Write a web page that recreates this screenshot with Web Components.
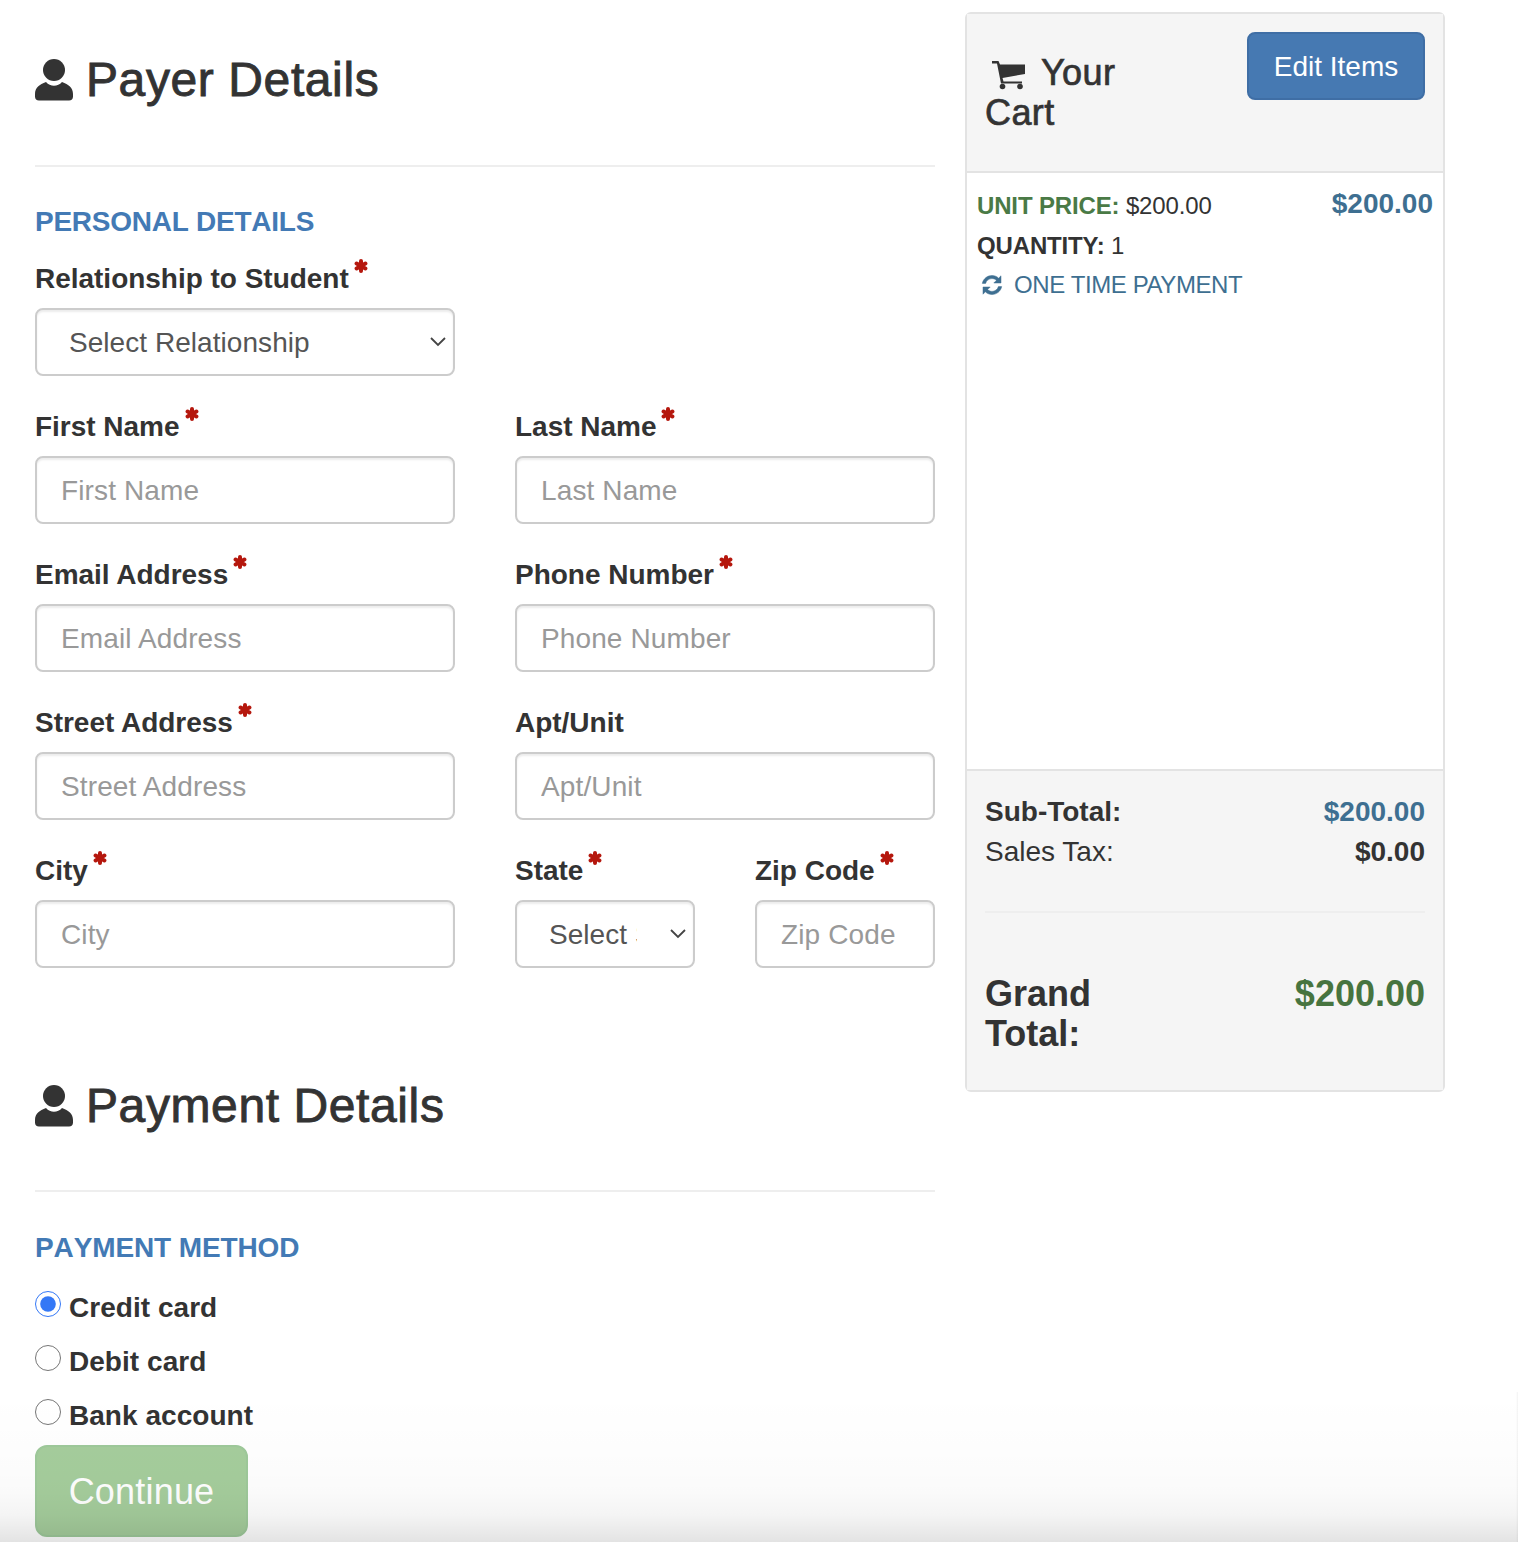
<!DOCTYPE html>
<html lang="en">
<head>
<meta charset="utf-8">
<title>Checkout</title>
<style>
  html, body { margin: 0; padding: 0; background: #fff; }
  body { height: 1542px; overflow: hidden; position: relative; font-family: "Liberation Sans", Arial, sans-serif; color: #333; }
</style>
</head>
<body>
<checkout-page>
  <div slot="form">
    <section-title>Payer Details</section-title>
    <sub-title>PERSONAL DETAILS</sub-title>
    <form-row>
      <form-field label="Relationship to Student" required>
        <drop-down text="Select Relationship"></drop-down>
      </form-field>
    </form-row>
    <form-row>
      <form-field label="First Name" required><text-box placeholder="First Name"></text-box></form-field>
      <form-field label="Last Name" required><text-box placeholder="Last Name"></text-box></form-field>
    </form-row>
    <form-row>
      <form-field label="Email Address" required><text-box placeholder="Email Address"></text-box></form-field>
      <form-field label="Phone Number" required><text-box placeholder="Phone Number"></text-box></form-field>
    </form-row>
    <form-row>
      <form-field label="Street Address" required><text-box placeholder="Street Address"></text-box></form-field>
      <form-field label="Apt/Unit"><text-box placeholder="Apt/Unit"></text-box></form-field>
    </form-row>
    <form-row>
      <form-field label="City" required><text-box placeholder="City"></text-box></form-field>
      <form-row nested>
        <form-field label="State" required><drop-down text="Select State"></drop-down></form-field>
        <form-field label="Zip Code" required><text-box placeholder="Zip Code"></text-box></form-field>
      </form-row>
    </form-row>
    <section-title second>Payment Details</section-title>
    <sub-title>PAYMENT METHOD</sub-title>
    <radio-option checked>Credit card</radio-option>
    <radio-option>Debit card</radio-option>
    <radio-option>Bank account</radio-option>
    <continue-button>Continue</continue-button>
  </div>
  <cart-panel slot="cart"></cart-panel>
</checkout-page>
<bottom-fade></bottom-fade>

<script>
(function() {

    // Shared helper: every element gets an open shadow root from a template string.
    function make(name, html, observed) {
        const template = document.createElement('template');
        template.innerHTML = html;
        class Element extends HTMLElement {
            constructor() {
                super();
                this.attachShadow({mode: 'open'});
                this.shadowRoot.appendChild(template.content.cloneNode(true));
            }
            connectedCallback() {
                if (observed) observed(this, this.shadowRoot);
            }
        }
        customElements.define(name, Element);
    }

    const USER_ICON = `<svg viewBox="0 0 38 42" width="38" height="42" fill="#333" aria-hidden="true">
        <circle cx="19" cy="11" r="11"/>
        <path d="M0 35C0 28.500 4.500 25.500 11 23c2.200 2.500 5 3.800 8 3.800s5.800-1.300 8-3.800c6.500 2.500 11 5.500 11 12v2.500c0 2.500-1.500 4-4 4H4c-2.500 0-4-1.500-4-4z"/>
    </svg>`;

    make('checkout-page', `
        <style>
          :host { display: flex; align-items: flex-start; gap: 30px; padding-left: 35px; }
          .form { width: 900px; flex: none; }
          .cart { width: 480px; flex: none; margin-top: 12px; }
        </style>
        <div class="form"><slot name="form"></slot></div>
        <div class="cart"><slot name="cart"></slot></div>`);

    make('section-title', `
        <style>
          :host { display: block; border-bottom: 2px solid #eee; height: 167px; box-sizing: border-box; }
          :host([second]) { height: 166px; margin-top: 43px; }
          h2 { margin: 0; padding-top: 54px; display: flex; align-items: center; gap: 13px; font-size: 48px; line-height: 52px; font-weight: 400; font-kerning: none; letter-spacing: .6px; -webkit-text-stroke: .9px #333; color: #333; }
          svg { flex: none; }
        </style>
        <h2>${USER_ICON}<slot></slot></h2>`);

    make('sub-title', `
        <style>
          :host { display: block; margin-top: 39px; font-size: 28px; line-height: 32px; font-weight: 700; font-kerning: none; color: #437ab5; letter-spacing: -.25px; }
          :host(:nth-of-type(2)) { margin-top: 40px; letter-spacing: -.12px; }
        </style>
        <slot></slot>`);

    make('form-row', `
        <style>
          :host { display: grid; grid-template-columns: 420px 420px; column-gap: 60px; margin-top: 16px; }
          :host(:first-of-type) { margin-top: 21px; }
          :host([nested]) { grid-template-columns: 180px 180px; margin: 0; }
        </style>
        <slot></slot>`);

    make('form-field', `
        <style>
          :host { display: block; height: 132px; }
          label { display: block; height: 40px; margin-bottom: 9px; font-size: 28px; line-height: 40px; font-weight: 700; color: #333; letter-spacing: -.02px; white-space: nowrap; }
          svg { margin-left: 5px; vertical-align: top; }
        </style>
        <label><span id="t"></span><svg id="r" width="14" height="14" viewBox="-7 -7 14 14" stroke="#b5170d" stroke-width="4" stroke-linecap="round" aria-hidden="true"><path d="M0-5V5M-4.400-2.500L4.400 2.500M-4.400 2.500L4.400-2.500"/></svg></label>
        <slot></slot>`,
        function (el, root) {
            root.getElementById('t').textContent = el.getAttribute('label');
            if (!el.hasAttribute('required')) root.getElementById('r').remove();
        });

    make('text-box', `
        <style>
          :host { display: block; }
          input { display: block; width: 100%; height: 68px; box-sizing: border-box; padding: 2px 24px 0; border: 2px solid #ccc; border-radius: 8px; background: #fff; font: 400 28px "Liberation Sans", Arial, sans-serif; color: #555; outline: 0; box-shadow: inset 0 2px 2px rgba(0,0,0,.075); letter-spacing: .12px; }
          input::placeholder { color: #999; opacity: 1; }
        </style>
        <input type="text">`,
        function (el, root) {
            root.querySelector('input').placeholder = el.getAttribute('placeholder');
        });

    make('drop-down', `
        <style>
          :host { display: block; position: relative; }
          select { display: block; width: 100%; height: 68px; box-sizing: border-box; padding: 0 56px 0 32px; appearance: none; -webkit-appearance: none; border: 2px solid #ccc; border-radius: 8px; background: #fff; font: 400 28px "Liberation Sans", Arial, sans-serif; color: #555; outline: 0; box-shadow: inset 0 2px 2px rgba(0,0,0,.075); letter-spacing: .05px; }
          svg { position: absolute; right: 9px; top: 29px; pointer-events: none; }
        </style>
        <select><option></option></select>
        <svg width="16" height="10" viewBox="0 0 16 10" fill="none" stroke="#444" stroke-width="1.800"><path d="M1 1l7 7 7-7"/></svg>`,
        function (el, root) {
            root.querySelector('option').textContent = el.getAttribute('text');
        });

    make('radio-option', `
        <style>
          :host { display: flex; align-items: flex-start; height: 46px; margin-bottom: 8px; font-size: 28px; font-weight: 700; color: #333; letter-spacing: .04px; }
          :host(:first-of-type) { margin-top: 27px; }
          :host(:last-of-type) { margin-bottom: 0; }
          input { width: 26px; height: 26px; margin: 0 8px 0 0; flex: none; accent-color: #3478f6; }
          span { line-height: 40px; margin-top: -3px; }
        </style>
        <input type="radio" name="method"><span><slot></slot></span>`,
        function (el, root) {
            root.querySelector('input').checked = el.hasAttribute('checked');
        });

    make('continue-button', `
        <style>
          :host { display: block; }
          button { display: block; width: 213px; height: 92px; padding: 2px 0 0; border: 2px solid #9ec99a; border-radius: 12px; background: #a5cd9c; color: #fff; font: 400 36px "Liberation Sans", Arial, sans-serif; letter-spacing: .2px; }
        </style>
        <button type="button"><slot></slot></button>`);

    make('cart-panel', `
        <style>
          :host { display: flex; flex-direction: column; height: 1080px; box-sizing: border-box; border: 2px solid #e3e3e3; border-radius: 6px; color: #333; font-size: 28px; }
          .head { height: 159px; flex: none; box-sizing: border-box; background: #f5f5f5; border-bottom: 2px solid #e3e3e3; display: flex; justify-content: space-between; padding: 18px 18px 0; }
          .head h3 { margin: 21px 0 0; width: 190px; font-size: 36px; line-height: 40px; font-weight: 400; letter-spacing: .4px; -webkit-text-stroke: .7px #333; }
          .head svg { margin: 0 15px 0 7px; vertical-align: -5px; }
          .edit { width: 178px; height: 68px; box-sizing: border-box; background: #4679b2; border: 2px solid #3f6ea5; border-radius: 8px; color: #fff; font: 400 28px "Liberation Sans", Arial, sans-serif; padding: 2px 0 0; }
          .items { flex: 1; padding: 13px 10px 0; font-size: 24px; line-height: 40px; }
          .line { display: flex; justify-content: space-between; align-items: flex-start; }
          .line > div:first-child, .qty { letter-spacing: -.15px; }
          .items b.g { color: #4a7a46; }
          .price { font-size: 28px; font-weight: 700; color: #3e6f91; line-height: 36px; }
          .once { color: #3e6f91; display: flex; align-items: center; gap: 11px; padding-left: 4px; letter-spacing: -.4px; margin-top: -1px; }
          .foot { flex: none; height: 321px; box-sizing: border-box; background: #f5f5f5; border-top: 2px solid #e3e3e3; padding: 21px 18px 0; line-height: 40px; }
          .row { display: flex; justify-content: space-between; }
          .blue { color: #3e6f91; }
          hr { border: 0; border-top: 2px solid #eee; margin: 39px 0 61px; height: 0; }
          .grand { font-size: 36px; font-weight: 700; align-items: flex-start; }
          .grand .amt { color: #47743f; }
          .grand .lbl { width: 130px; }
        </style>
        <div class="head">
          <h3><svg width="34" height="29" viewBox="0 0 34 29" fill="#333" aria-hidden="true"><path d="M0 0h6.500L8 3.500h25V13l-22.500 4 1 3.500H30v2H9L5 2.500H0z"/><circle cx="10.500" cy="25.500" r="2.800"/><circle cx="28" cy="25.500" r="2.800"/></svg>Your Cart</h3>
          <button class="edit" type="button">Edit Items</button>
        </div>
        <div class="items">
          <div class="line">
            <div><b class="g">UNIT PRICE:</b> $200.00</div>
            <div class="price">$200.00</div>
          </div>
          <div class="qty"><b>QUANTITY:</b> 1</div>
          <div class="once"><svg width="22" height="22" viewBox="0 0 22 22" fill="#3e6f91" stroke="#3e6f91" stroke-width=".5" aria-hidden="true"><path d="M11 1.500c2.600 0 4.900 1 6.600 2.700L20 1.800V9h-7.200l2.600-2.600C14.200 5.300 12.700 4.600 11 4.600 8 4.600 5.400 6.600 4.600 9.400H1.300C2.200 4.900 6.200 1.500 11 1.500zM2 13h7.200l-2.600 2.600c1.200 1.100 2.700 1.800 4.400 1.800 3 0 5.600-2 6.400-4.800h3.300c-.9 4.500-4.900 7.900-9.700 7.900-2.600 0-4.900-1-6.600-2.700L2 20.200z"/></svg><span>ONE TIME PAYMENT</span></div>
        </div>
        <div class="foot">
          <div class="row"><b>Sub-Total:</b><b class="blue">$200.00</b></div>
          <div class="row"><span>Sales Tax:</span><b>$0.00</b></div>
          <hr>
          <div class="row grand"><div class="lbl">Grand Total:</div><div class="amt">$200.00</div></div>
        </div>`);

    // The soft grey band along the bottom edge of the window, and the sliver on the right.
    make('bottom-fade', `
        <style>
          :host { display: block; position: absolute; left: 0; right: 0; bottom: 0; height: 150px; pointer-events: none; background:
            linear-gradient(to left, rgba(0,0,0,.05), rgba(0,0,0,0)) right top / 2px 100% no-repeat,
            linear-gradient(to bottom, rgba(0,0,0,0) 0%, rgba(0,0,0,.01) 52%, rgba(0,0,0,.02) 67%, rgba(0,0,0,.045) 82%, rgba(0,0,0,.09) 95%, rgba(0,0,0,.11) 100%); }
        </style>`);

})();
</script>
</body>
</html>
